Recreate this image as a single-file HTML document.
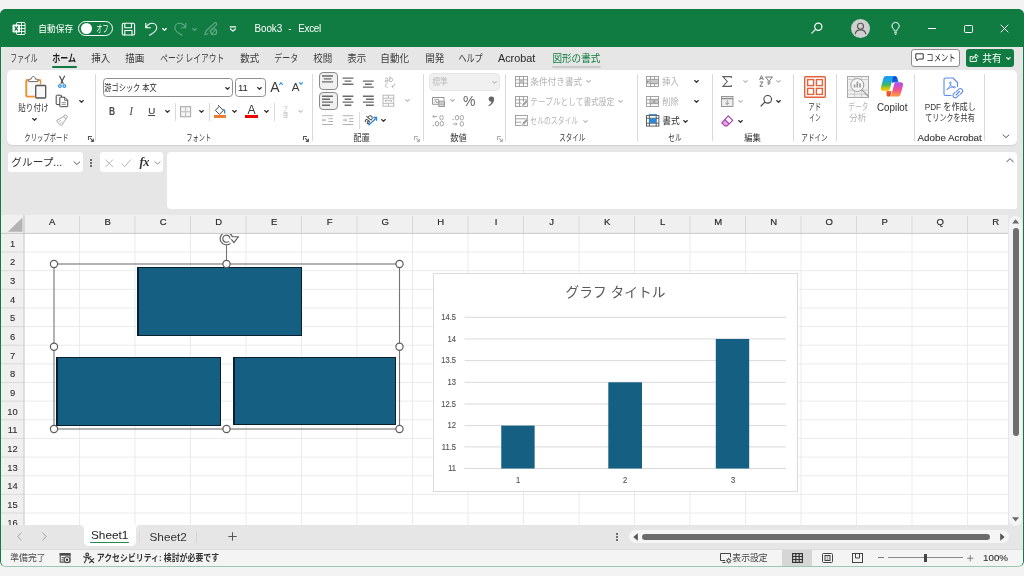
<!DOCTYPE html>
<html lang="ja">
<head>
<meta charset="utf-8">
<title>Book3 - Excel</title>
<style>
html,body{margin:0;padding:0;}
body{width:1024px;height:576px;overflow:hidden;background:#f3f3f3;font-family:"Liberation Sans",sans-serif;}
#root{position:relative;width:1024px;height:576px;overflow:hidden;background:#f3f3f3;}
#root *{box-sizing:border-box;}
#layer{position:absolute;left:0;top:0;width:1024px;height:576px;will-change:transform;}
.a{position:absolute;}
svg.j{position:absolute;overflow:visible;display:block;}
svg.j text{font-family:"Liberation Sans","Noto Sans CJK JP",sans-serif;font-size:250px;}
svg.i{position:absolute;overflow:visible;display:block;}
.t{position:absolute;white-space:nowrap;line-height:1;color:#222;}
/* window */
#win{position:absolute;left:0;top:9px;width:1024px;height:557.5px;background:#e6e6e6;border-radius:6px;border:1.1px solid #107c41;border-bottom-color:#98c8ad;}
#titlebar{position:absolute;left:0;top:9.200px;width:1024px;height:37.800px;background:#107c41;border-radius:6px 6px 0 0;}
#ribbon{position:absolute;left:7px;top:69.5px;width:1010px;height:75.5px;background:#fff;border-radius:5px;box-shadow:0 1px 1px rgba(0,0,0,.10);}
.sep{position:absolute;width:1px;background:#d6d6d6;}
.grp{position:absolute;}
/* grid */
#grid{position:absolute;left:1px;top:215px;width:1007px;height:310px;background:#fff;overflow:hidden;}
.ch{font-size:9.500px;text-align:center;color:#2a2a2a;-webkit-text-stroke:.2px #2a2a2a;}
.rh{font-size:9.400px;text-align:center;color:#2a2a2a;-webkit-text-stroke:.1px #2a2a2a;}
.yl{left:426.400px;width:30px;text-align:right;font-size:8.700px;color:#555;transform:scaleX(.87);transform-origin:100% 50%;-webkit-text-stroke:.15px #555;}
.xl{top:475.700px;width:20px;text-align:center;font-size:8.700px;color:#555;transform:scaleX(.87);-webkit-text-stroke:.15px #555;}
.shp{background:#156082;border-style:solid;border-color:#07202e;border-width:1.400px 1.100px 1.100px 2px;}
</style>
</head>
<body>
<div id="root">
<div id="win"></div>
<div id="layer">
<div id="titlebar"></div>
<!-- ===== title bar ===== -->
<svg class="i" style="left:12px;top:21px" width="14" height="15" viewBox="0 0 14 15">
 <rect x="4.5" y="1.5" width="8.500" height="12" rx="1" fill="none" stroke="#fff" stroke-width="1"/>
 <path d="M8 4.500h5M8 7.500h5M8 10.500h5M9.500 1.500v12" stroke="#fff" stroke-width="1" fill="none" opacity=".85"/>
 <rect x="0.5" y="3.5" width="7.500" height="8" rx="1" fill="#fff"/>
 <path d="M2.600 5.400l3.300 4.200M5.900 5.400l-3.300 4.200" stroke="#107c41" stroke-width="1.300" fill="none"/>
</svg>
<svg class="j" style="left:37.5px;top:24px" width="35.5" height="9.4" viewBox="0 -220 1000 250" preserveAspectRatio="none" fill="#fff"><text x="10" y="0" textLength="980" lengthAdjust="spacingAndGlyphs">自動保存</text></svg>
<div class="a" style="left:78px;top:21px;width:35.200px;height:15.400px;border:1.300px solid #fff;border-radius:8px;"></div>
<div class="a" style="left:80.600px;top:23.200px;width:11px;height:11px;border-radius:5.500px;background:#fff;"></div>
<svg class="j" style="left:96px;top:24px" width="13" height="9.4" viewBox="0 -220 430 250" preserveAspectRatio="none" fill="#fff"><text x="10" y="0" textLength="410" lengthAdjust="spacingAndGlyphs">オフ</text></svg>
<!-- save / undo / redo / pen / qat (page coords) -->
<svg class="i" style="left:0;top:0" width="1024" height="48" viewBox="0 0 1024 48" fill="none" stroke="#fff" stroke-width="1.100" stroke-linecap="round" stroke-linejoin="round">
 <rect x="122.300" y="23.300" width="12.300" height="11.700" rx="1.300"/>
 <path d="M124.800 23.500v4.200h6.700v-4.200M124.800 34.900v-4.400h7.200v4.400"/>
 <path d="M145.800 23.300v4.500h4.600"/>
 <path d="M146.100 27.500c1.500-2.800 3.900-4.200 6.200-4.200 2.700 0 4.400 2.200 4.400 4.700 0 2-1.200 3.200-2.700 4.400l-4.400 2.800"/>
 <g stroke="#63ab87">
  <path d="M185.800 23.300v4.500h-4.600"/>
  <path d="M185.500 27.500c-1.500-2.800-3.900-4.200-6.200-4.200-2.700 0-4.400 2.200-4.400 4.700 0 2 1.200 3.200 2.700 4.400l4.400 2.800"/>
  <path d="M204.800 34.700l1.200-3.700 8.300-7.800a1.400 1.400 0 0 1 2 2l-6.300 6M204.800 34.700l3.200-.9"/>
  <circle cx="213.700" cy="31.700" r="3"/><path d="M211.600 33.800l4.200-4.200"/>
 </g>
 <path d="M230.200 26.800h5.500M230.500 29l2.450 2.100L235.400 29" stroke-width="1.200"/>
</svg>
<svg class="i" style="left:161.5px;top:27.75px" width="5" height="2.83" viewBox="0 0 6 3.4" fill="none" stroke="#fff" stroke-width="1.56" stroke-linecap="round" stroke-linejoin="round"><path d="M.8.7L3 2.700 5.200.7"/></svg>
<svg class="i" style="left:191.5px;top:27.75px" width="5" height="2.83" viewBox="0 0 6 3.4" fill="none" stroke="#63ab87" stroke-width="1.44" stroke-linecap="round" stroke-linejoin="round"><path d="M.8.7L3 2.700 5.200.7"/></svg>
<div class="t" style="left:254.500px;top:24.100px;font-size:9.900px;color:#fff;transform:scaleY(1.12);letter-spacing:-.08px;">Book3</div>
<div class="t" style="left:288.300px;top:24.100px;font-size:9.900px;color:#fff;transform:scaleY(1.12);">-</div>
<div class="t" style="left:298.300px;top:24.100px;font-size:9.900px;color:#fff;transform:scaleY(1.12);letter-spacing:-.32px;">Excel</div>
<!-- right side -->
<svg class="i" style="left:810px;top:21px" width="14" height="14" viewBox="0 0 14 14" fill="none" stroke="#fff" stroke-width="1.2" stroke-linecap="round"><circle cx="8.3" cy="5.7" r="3.6"/><path d="M5.600 8.400L1.800 12.200"/></svg>
<div class="a" style="left:850.5px;top:18.5px;width:19px;height:19px;border-radius:10px;background:#d0d0d0;"></div>
<svg class="i" style="left:850.5px;top:18.5px" width="19" height="19" viewBox="0 0 19 19" fill="none" stroke="#555" stroke-width="1.1"><circle cx="9.5" cy="7.3" r="3"/><path d="M4.200 15.300c.3-3 2.400-4.400 5.300-4.400s5 1.400 5.300 4.400"/></svg>
<svg class="i" style="left:889.500px;top:21.200px" width="11.200" height="14.500" viewBox="0 0 12 16" fill="none" stroke="#fff" stroke-width="1.1" stroke-linejoin="round"><path d="M6 1.500a4 4 0 0 0-2.400 7.200c.6.500.9 1.100.9 1.800v.5h3v-.5c0-.7.300-1.300.9-1.800A4 4 0 0 0 6 1.500z"/><path d="M4.500 13h3M5 14.600h2"/></svg>
<div class="a" style="left:928px;top:28.300px;width:8.300px;height:1.100px;background:#fff;"></div>
<div class="a" style="left:964.300px;top:24.700px;width:8.300px;height:8.100px;border:1.100px solid #fff;border-radius:1.500px;"></div>
<svg class="i" style="left:1000.400px;top:24.300px" width="9" height="9" viewBox="0 0 10 10" fill="none" stroke="#fff" stroke-width="1.1"><path d="M.8.8l8.400 8.400M9.200.8L.8 9.200"/></svg>
<!-- ===== ribbon tabs ===== -->
<svg class="j" style="left:10px;top:53.2px" width="28" height="10.6" viewBox="0 -220 860 250" preserveAspectRatio="none" fill="#3c3c3c"><text x="10" y="0" textLength="840" lengthAdjust="spacingAndGlyphs">ファイル</text></svg>
<svg class="j" style="left:51.8px;top:53.2px" width="24.5" height="10.6" viewBox="0 -220 645 250" preserveAspectRatio="none" fill="#1a1a1a"><text x="10" y="0" textLength="625" lengthAdjust="spacingAndGlyphs" font-weight="bold">ホーム</text></svg>
<div class="a" style="left:51.800px;top:65.700px;width:25px;height:2px;background:#107c41;border-radius:1px;"></div>
<svg class="j" style="left:91px;top:53.2px" width="19.5" height="10.6" viewBox="0 -220 500 250" preserveAspectRatio="none" fill="#3c3c3c"><text x="6" y="0" textLength="488" lengthAdjust="spacingAndGlyphs">挿入</text></svg>
<svg class="j" style="left:124.5px;top:53.2px" width="19.5" height="10.6" viewBox="0 -220 500 250" preserveAspectRatio="none" fill="#3c3c3c"><text x="6" y="0" textLength="488" lengthAdjust="spacingAndGlyphs">描画</text></svg>
<svg class="j" style="left:160px;top:53.2px" width="64.5" height="10.6" viewBox="0 -220 1795 250" preserveAspectRatio="none" fill="#3c3c3c"><text x="10" y="0" textLength="1775" lengthAdjust="spacingAndGlyphs">ページ レイアウト</text></svg>
<svg class="j" style="left:240px;top:53.2px" width="19.5" height="10.6" viewBox="0 -220 500 250" preserveAspectRatio="none" fill="#3c3c3c"><text x="6" y="0" textLength="488" lengthAdjust="spacingAndGlyphs">数式</text></svg>
<svg class="j" style="left:274px;top:53.2px" width="24.5" height="10.6" viewBox="0 -220 645 250" preserveAspectRatio="none" fill="#3c3c3c"><text x="10" y="0" textLength="625" lengthAdjust="spacingAndGlyphs">データ</text></svg>
<svg class="j" style="left:312.5px;top:53.2px" width="19.5" height="10.6" viewBox="0 -220 500 250" preserveAspectRatio="none" fill="#3c3c3c"><text x="6" y="0" textLength="488" lengthAdjust="spacingAndGlyphs">校閲</text></svg>
<svg class="j" style="left:346.5px;top:53.2px" width="19.5" height="10.6" viewBox="0 -220 500 250" preserveAspectRatio="none" fill="#3c3c3c"><text x="6" y="0" textLength="488" lengthAdjust="spacingAndGlyphs">表示</text></svg>
<svg class="j" style="left:380px;top:53.2px" width="29.5" height="10.6" viewBox="0 -220 750 250" preserveAspectRatio="none" fill="#3c3c3c"><text x="8" y="0" textLength="734" lengthAdjust="spacingAndGlyphs">自動化</text></svg>
<svg class="j" style="left:424.5px;top:53.2px" width="19.5" height="10.6" viewBox="0 -220 500 250" preserveAspectRatio="none" fill="#3c3c3c"><text x="6" y="0" textLength="488" lengthAdjust="spacingAndGlyphs">開発</text></svg>
<svg class="j" style="left:458px;top:53.2px" width="25" height="10.6" viewBox="0 -220 645 250" preserveAspectRatio="none" fill="#3c3c3c"><text x="10" y="0" textLength="625" lengthAdjust="spacingAndGlyphs">ヘルプ</text></svg>
<div class="t" style="left:498px;top:53.400px;font-size:10.800px;color:#2e2e2e;-webkit-text-stroke:.08px #2e2e2e;">Acrobat</div>
<svg class="j" style="left:551.7px;top:53.2px" width="48.8" height="10.6" viewBox="0 -220 1215 250" preserveAspectRatio="none" fill="#107c41"><text x="10" y="0" textLength="1195" lengthAdjust="spacingAndGlyphs">図形の書式</text></svg>
<div class="a" style="left:551.500px;top:65.700px;width:49.500px;height:2px;background:#cbcbcb;border-radius:1px;"></div>
<!-- comment / share buttons -->
<div class="a" style="left:911px;top:49px;width:48.5px;height:17.5px;background:#fff;border:1px solid #8c8c8c;border-radius:3px;"></div>
<svg class="i" style="left:915px;top:53px" width="9" height="9" viewBox="0 0 9 9" fill="none" stroke="#333" stroke-width="1"><path d="M.8.8h7.400v5.200H3.600L1.900 7.900V6H.8z"/></svg>
<svg class="j" style="left:926px;top:53px" width="30" height="9.6" viewBox="0 -220 860 250" preserveAspectRatio="none" fill="#222"><text x="10" y="0" textLength="840" lengthAdjust="spacingAndGlyphs">コメント</text></svg>
<div class="a" style="left:966px;top:49px;width:48px;height:17.5px;background:#107c41;border-radius:3px;"></div>
<svg class="i" style="left:969px;top:53px" width="9.500" height="9.500" viewBox="0 0 10 10" fill="none" stroke="#fff" stroke-width="1" stroke-linejoin="round"><path d="M3.600 3.700H1.200v5.200h6.600V6.400"/><path d="M3.400 6.600c.2-2 1.500-3.400 3.700-3.500V1.200L9.400 3.500 7.100 5.800V4.200c-1.600 0-2.800.7-3.700 2.400z"/></svg>
<svg class="j" style="left:982.4px;top:53px" width="19.8" height="9.8" viewBox="0 -220 500 250" preserveAspectRatio="none" fill="#fff"><text x="6" y="0" textLength="488" lengthAdjust="spacingAndGlyphs">共有</text></svg>
<svg class="i" style="left:1005.800px;top:56.700px" width="4.800" height="3.200" viewBox="0 0 6 4" fill="none" stroke="#fff" stroke-width="1.500" stroke-linecap="round" stroke-linejoin="round"><path d="M.8.8L3 3 5.200.8"/></svg>
<!-- ===== ribbon body ===== -->
<div id="ribbon"></div>
<!-- clipboard group -->
<svg class="i" style="left:0;top:0" width="120" height="150" viewBox="0 0 120 150" fill="none">
 <path d="M29.500 79.900H27.300a1 1 0 0 0-1 1v14.600a1 1 0 0 0 1 1h7.500M37.300 79.900h2a1 1 0 0 1 1 1v3.600" stroke="#f0922e" stroke-width="2"/>
 <path d="M27.800 81v14.500h7V84.500h5V81z" fill="#fafafa"/>
 <path d="M28.700 81.600v-1.700a.7.700 0 0 1 .7-.7h1.700c.3-1.700 1.100-2.700 2.200-2.700s1.900 1 2.200 2.700h1.700a.7.700 0 0 1 .7.700v1.700z" fill="#fff" stroke="#6a6a6a" stroke-width="1"/>
 <rect x="35.700" y="85.500" width="10" height="12.500" rx=".8" fill="#f8f8f8" stroke="#555" stroke-width="1.300"/>
 <!-- scissors -->
 <path d="M59.500 75.800l3.900 8M64.700 75.800l-3.900 8" stroke="#444" stroke-width="1.100"/>
 <circle cx="59.900" cy="86" r="1.350" stroke="#3a96dd" stroke-width="1.300"/><circle cx="64.300" cy="86" r="1.350" stroke="#3a96dd" stroke-width="1.300"/>
 <!-- copy -->
 <path d="M59.800 104.600h-3a.6.600 0 0 1-.6-.6V95.800a.6.600 0 0 1 .6-.6h4.100a.6.600 0 0 1 .6.600v1.200" stroke="#444" stroke-width="1"/>
 <path d="M60.400 97.200h4.300l3 3v5.900a.6.600 0 0 1-.6.600H60.400a.6.600 0 0 1-.6-.6V97.800a.6.600 0 0 1 .6-.6z" fill="#fff" stroke="#444" stroke-width="1"/>
 <path d="M64.600 97.400v2.900h3" stroke="#444" stroke-width=".8"/><path d="M61.700 102.600h4.100M61.700 104.400h4.100" stroke="#777" stroke-width=".8"/>
 <!-- format painter (dim) -->
 <g stroke="#a2a2a2" stroke-width=".9" stroke-linejoin="round">
  <path d="M64.800 114.700l2.900 1.700-1.300 2.300-2.900-1.700z"/>
  <path d="M63.700 116.700l-7 3.600c.7 2.300 2.400 4.200 5 5.200l4.400-6.800"/>
  <path d="M58.600 121.800l2.500-1.700M60.200 123.600l2.500-1.800" stroke-width=".7"/>
 </g>
</svg>
<svg class="j" style="left:18.3px;top:102.7px" width="30.8" height="9.4" viewBox="0 -220 930 250" preserveAspectRatio="none" fill="#333"><text x="8" y="0" textLength="914" lengthAdjust="spacingAndGlyphs">貼り付け</text></svg>
<svg class="i" style="left:32.3px;top:117.55px" width="5" height="2.83" viewBox="0 0 6 3.4" fill="none" stroke="#333" stroke-width="1.5" stroke-linecap="round" stroke-linejoin="round"><path d="M.8.7L3 2.700 5.200.7"/></svg>
<svg class="i" style="left:78.5px;top:99.55px" width="5" height="2.83" viewBox="0 0 6 3.4" fill="none" stroke="#333" stroke-width="1.5" stroke-linecap="round" stroke-linejoin="round"><path d="M.8.7L3 2.700 5.200.7"/></svg>
<svg class="j" style="left:24px;top:133.1px" width="45" height="9" viewBox="0 -220 1505 250" preserveAspectRatio="none" fill="#333"><text x="10" y="0" textLength="1485" lengthAdjust="spacingAndGlyphs">クリップボード</text></svg>
<svg class="i" style="left:87.5px;top:135.6px" width="6" height="6" viewBox="0 0 6 6" fill="none" stroke="#555" stroke-width="1.1"><path d="M.5 4V.5H4"/><path d="M2.200 2.200L5.300 5.300M5.400 2.800v2.600H2.800"/></svg>
<div class="a" style="left:95px;top:74px;width:1px;height:67px;background:#d9d9d9"></div>
<!-- font group -->
<div class="a" style="left:102.500px;top:78px;width:130.500px;height:19px;border:1px solid #8f8f8f;border-radius:3.500px;background:#fff;"></div>
<svg class="j" style="left:104.3px;top:83.4px" width="53" height="9" viewBox="0 -220 1685 250" preserveAspectRatio="none" fill="#2c2c2c"><text x="8" y="0" textLength="1669" lengthAdjust="spacingAndGlyphs">游ゴシック 本文</text></svg>
<svg class="i" style="left:225px;top:86.75px" width="5" height="2.83" viewBox="0 0 6 3.4" fill="none" stroke="#333" stroke-width="1.5" stroke-linecap="round" stroke-linejoin="round"><path d="M.8.7L3 2.700 5.200.7"/></svg>
<div class="a" style="left:234.700px;top:78px;width:31px;height:19px;border:1px solid #8f8f8f;border-radius:3.500px;background:#fff;"></div>
<div class="t" style="left:238px;top:83px;font-size:9.600px;color:#222;">11</div>
<svg class="i" style="left:256.5px;top:86.75px" width="5" height="2.83" viewBox="0 0 6 3.4" fill="none" stroke="#333" stroke-width="1.5" stroke-linecap="round" stroke-linejoin="round"><path d="M.8.7L3 2.700 5.200.7"/></svg>
<div class="t" style="left:270.300px;top:79.600px;font-size:14px;color:#3a3a3a;">A</div>
<svg class="i" style="left:278.600px;top:82px" width="4" height="3" viewBox="0 0 4 3" fill="none" stroke="#2b9ae0" stroke-width="1.200" stroke-linecap="round" stroke-linejoin="round"><path d="M.6 2.500L2 .7 3.400 2.500"/></svg>
<div class="t" style="left:291.700px;top:81.900px;font-size:11.500px;color:#3a3a3a;">A</div>
<svg class="i" style="left:298.500px;top:82px" width="4" height="3" viewBox="0 0 4 3" fill="none" stroke="#2b9ae0" stroke-width="1.200" stroke-linecap="round" stroke-linejoin="round"><path d="M.6 .6L2 2.400 3.400 .6"/></svg>
<!-- row 2 -->
<div class="t" style="left:107.500px;top:105.700px;width:8px;text-align:center;font-size:10.800px;font-weight:bold;color:#4a4a4a;transform:scaleX(.78);">B</div>
<div class="t" style="left:129.300px;top:106.300px;font-size:11.600px;font-style:italic;font-family:'Liberation Serif',serif;color:#555;">I</div>
<div class="t" style="left:148.300px;top:105.500px;font-size:9.800px;color:#4a4a4a;-webkit-text-stroke:.2px #4a4a4a;">U</div>
<div class="a" style="left:148px;top:115.400px;width:7.200px;height:1.100px;background:#4a4a4a;"></div>
<svg class="i" style="left:164.5px;top:110.25px" width="5" height="2.83" viewBox="0 0 6 3.4" fill="none" stroke="#333" stroke-width="1.5" stroke-linecap="round" stroke-linejoin="round"><path d="M.8.7L3 2.700 5.200.7"/></svg>
<div class="a" style="left:175px;top:103px;width:1px;height:18px;background:#d9d9d9"></div>
<svg class="i" style="left:180px;top:105.500px" width="11.200" height="11.400" viewBox="0 0 12 12" fill="none" stroke="#a6a6a6" stroke-width="1.100"><rect x=".6" y=".6" width="10.800" height="10.800" fill="#f4f4f4"/><path d="M6 .6v10.800M.6 6h10.800" stroke="#bcbcbc"/></svg>
<svg class="i" style="left:198.5px;top:110.25px" width="5" height="2.83" viewBox="0 0 6 3.4" fill="none" stroke="#333" stroke-width="1.5" stroke-linecap="round" stroke-linejoin="round"><path d="M.8.7L3 2.700 5.200.7"/></svg>
<div class="a" style="left:208.8px;top:103px;width:1px;height:18px;background:#d9d9d9"></div>
<!-- fill colour -->
<svg class="i" style="left:214px;top:104.500px" width="12" height="11" viewBox="0 0 12 11" fill="none" stroke="#444" stroke-width="1" stroke-linejoin="round"><path d="M5.300 1.300l4 4.200-3.900 3.900L1.400 5.300z"/><path d="M5.300 1.300L4 .3"/><path d="M9.300 4.200c1.300.8 1.700 2.600 1.300 4.300" stroke="#2b88d8" stroke-width="1.300"/></svg>
<div class="a" style="left:213.500px;top:115px;width:12.500px;height:2.800px;background:#ed7d31;"></div>
<svg class="i" style="left:232px;top:110.35px" width="5" height="2.83" viewBox="0 0 6 3.4" fill="none" stroke="#333" stroke-width="1.5" stroke-linecap="round" stroke-linejoin="round"><path d="M.8.7L3 2.700 5.200.7"/></svg>
<!-- font colour -->
<div class="t" style="left:247.400px;top:104.100px;font-size:12.200px;color:#3a3a3a;">A</div>
<div class="a" style="left:245px;top:114.800px;width:12.800px;height:3px;background:#f00000;"></div>
<svg class="i" style="left:264px;top:110.35px" width="5" height="2.83" viewBox="0 0 6 3.4" fill="none" stroke="#333" stroke-width="1.5" stroke-linecap="round" stroke-linejoin="round"><path d="M.8.7L3 2.700 5.200.7"/></svg>
<div class="a" style="left:274.2px;top:103px;width:1px;height:18px;background:#d9d9d9"></div>
<svg class="j" style="left:282.6px;top:105.700px" width="5.2" height="6.2" viewBox="0 -220 215 250" preserveAspectRatio="none" fill="#bdbdbd"><text x="5" y="0" textLength="205" lengthAdjust="spacingAndGlyphs">ア</text></svg>
<svg class="j" style="left:282.6px;top:112.2px" width="5.4" height="6.2" viewBox="0 -220 250 250" preserveAspectRatio="none" fill="#bdbdbd"><text x="3" y="0" textLength="244" lengthAdjust="spacingAndGlyphs">亜</text></svg>
<svg class="i" style="left:297.7px;top:110.35px" width="5" height="2.83" viewBox="0 0 6 3.4" fill="none" stroke="#c2c2c2" stroke-width="1.32" stroke-linecap="round" stroke-linejoin="round"><path d="M.8.7L3 2.700 5.200.7"/></svg>
<svg class="j" style="left:185.5px;top:133.1px" width="25.5" height="9" viewBox="0 -220 860 250" preserveAspectRatio="none" fill="#333"><text x="10" y="0" textLength="840" lengthAdjust="spacingAndGlyphs">フォント</text></svg>
<svg class="i" style="left:303px;top:135.6px" width="6" height="6" viewBox="0 0 6 6" fill="none" stroke="#555" stroke-width="1.1"><path d="M.5 4V.5H4"/><path d="M2.200 2.200L5.300 5.300M5.400 2.800v2.600H2.800"/></svg>
<div class="a" style="left:311.5px;top:74px;width:1px;height:67px;background:#d9d9d9"></div>
<!-- alignment group -->
<div class="a" style="left:318.600px;top:72.400px;width:19.200px;height:18px;border:1.200px solid #8a8a8a;border-radius:4px;background:#f0f0f0;"></div>
<div class="a" style="left:318.600px;top:92.200px;width:19.200px;height:17.800px;border:1.200px solid #8a8a8a;border-radius:4px;background:#f0f0f0;"></div>
<svg class="i" style="left:0;top:0" width="1024" height="150" viewBox="0 0 1024 150" fill="none" stroke="#6a6a6a" stroke-width="1.400">
 <!-- top / middle / bottom -->
 <path d="M322 76h11M323.800 78.900h7.700M322 81.900h11"/>
 <path d="M342.600 78.100h10.800M344.600 81.100h6.800M342.600 84.200h10.800"/>
 <path d="M362.900 81.100h10.900M364.900 84.200h6.900M362.900 87.100h10.900"/>
 <!-- left / center / right -->
 <path d="M322 96.200h11M322 99.200h8M322 102.100h11M322 105.200h8"/>
 <path d="M342.600 96.200h10.800M344.600 99.200h6.800M342.600 102.100h10.800M344.600 105.200h6.800"/>
 <path d="M362.900 96.200h10.900M365.900 99.200h7.900M362.900 102.100h10.900M365.900 105.200h7.900"/>
 <!-- wrap text (dim) -->
 <g stroke="#b2b2b2" stroke-width=".9">
  <path d="M385.300 79.200c0-1.700 2.600-1.700 2.600 0v2.300M387.900 80.200c-1.200 0-2.800.1-2.800 1.100 0 1.200 2.800 1 2.800-.8M389.800 76.500v5.200c1.700.3 3-.5 3-1.900s-1.300-2.100-3-1.700"/>
  <path d="M387.600 83.800c-1.600 0-2.300.8-2.300 1.800s.7 1.800 2.300 1.800M394.500 83.600c.4 1.600-.4 3-2.600 3M393.300 85.400l-1.500 1.200 1.500 1.300"/>
 </g>
 <!-- merge (dim) -->
 <g stroke="#b2b2b2" stroke-width=".9">
  <rect x="383" y="95.200" width="10.800" height="11"/><path d="M383 98.200h10.800M383 103.300h10.800M388.400 95.200v3M388.400 103.300v2.900M385 100.700h6.800M386.300 99.500l-1.300 1.200 1.300 1.300M390.500 99.500l1.300 1.200-1.300 1.300"/>
 </g>
 <!-- indents (dim) -->
 <g stroke="#b2b2b2" stroke-width="1">
  <path d="M322 115.700h11M328.400 118.700h4.600M328.400 121.500h4.600M322 124.500h11M326.200 120.100h-3.800M323.900 118.600l-1.500 1.500 1.500 1.500" />
  <path d="M342.600 115.700h10.800M349 118.700h4.400M349 121.500h4.400M342.600 124.500h10.800M342.800 120.100h3.800M345.100 118.600l1.500 1.500-1.500 1.500"/>
 </g>
 <path d="M359.600 112v17.300" stroke="#d9d9d9" stroke-width="1"/>
 <!-- orientation -->
 <g transform="rotate(-52 369 119)" stroke="#444" stroke-width=".95">
  <path d="M364.600 118.300c0-1.800 2.800-1.800 2.800 0v3M367.400 119.500c-1.300 0-3 .1-3 1.200 0 1.300 3 1.100 3-.9M369.500 115.300v6c1.800.3 3.200-.6 3.200-2.100s-1.400-2.300-3.200-1.900"/>
 </g>
 <path d="M368.500 125.300l7.600-7.100" stroke="#2b88d8" stroke-width="1.300"/><path d="M373.300 117.500h3.300v3.300" stroke="#2b88d8" stroke-width="1.300"/>
</svg>
<svg class="i" style="left:404.8px;top:99.35px" width="5" height="2.83" viewBox="0 0 6 3.4" fill="none" stroke="#bcbcbc" stroke-width="1.44" stroke-linecap="round" stroke-linejoin="round"><path d="M.8.7L3 2.700 5.200.7"/></svg>
<svg class="i" style="left:381.2px;top:119.45px" width="5" height="2.83" viewBox="0 0 6 3.4" fill="none" stroke="#333" stroke-width="1.5" stroke-linecap="round" stroke-linejoin="round"><path d="M.8.7L3 2.700 5.200.7"/></svg>
<svg class="j" style="left:353px;top:133.1px" width="17" height="9" viewBox="0 -220 500 250" preserveAspectRatio="none" fill="#333"><text x="6" y="0" textLength="488" lengthAdjust="spacingAndGlyphs">配置</text></svg>
<svg class="i" style="left:414px;top:135.6px" width="6" height="6" viewBox="0 0 6 6" fill="none" stroke="#b0b0b0" stroke-width="1.1"><path d="M.5 4V.5H4"/><path d="M2.200 2.200L5.300 5.300M5.400 2.800v2.600H2.800"/></svg>
<div class="a" style="left:422.5px;top:74px;width:1px;height:67px;background:#d9d9d9"></div>
<!-- number group -->
<div class="a" style="left:429px;top:72.500px;width:71px;height:18px;border:1px solid #e6e6e6;border-radius:4px;background:#f0f0f0;"></div>
<svg class="j" style="left:432px;top:77.1px" width="16" height="9.2" viewBox="0 -220 500 250" preserveAspectRatio="none" fill="#bdbdbd"><text x="6" y="0" textLength="488" lengthAdjust="spacingAndGlyphs">標準</text></svg>
<svg class="i" style="left:492.3px;top:80.75px" width="5" height="2.83" viewBox="0 0 6 3.4" fill="none" stroke="#bbbbbb" stroke-width="1.32" stroke-linecap="round" stroke-linejoin="round"><path d="M.8.7L3 2.700 5.200.7"/></svg>
<svg class="i" style="left:432px;top:97px" width="13" height="10" viewBox="0 0 13 10" fill="none" stroke="#8a8a8a" stroke-width=".9"><path d="M6 7.300H.5V.5h11.500v3"/><circle cx="5.200" cy="3.800" r="1.700"/><path d="M2 2.200l1 1M2 5.600l1-1"/><rect x="6.800" y="4.200" width="5.600" height="5.300" fill="#fff"/><path d="M6.800 6h5.600M6.800 7.800h5.600"/></svg>
<svg class="i" style="left:450px;top:99.35px" width="5" height="2.83" viewBox="0 0 6 3.4" fill="none" stroke="#b0b0b0" stroke-width="1.44" stroke-linecap="round" stroke-linejoin="round"><path d="M.8.7L3 2.700 5.200.7"/></svg>
<div class="t" style="left:463px;top:93.500px;font-size:14px;color:#666;">%</div>
<svg class="i" style="left:486.500px;top:95.500px" width="8" height="11" viewBox="0 0 8 11"><path d="M4.300 .4a2.700 2.700 0 0 1 2.800 2.900c0 3-2 5.600-5.200 6.900l-.5-.9c1.900-1 3-2.300 3.200-3.700a2.600 2.600 0 0 1-3-2.600A2.600 2.600 0 0 1 4.300 .4z" fill="#666"/></svg>
<svg class="i" style="left:431.500px;top:114.500px" width="13" height="12" viewBox="0 0 13 12" fill="none" stroke="#a4a4a4" stroke-width="1"><path d="M5 1.500H.8M2.200 .2L.8 1.500l1.400 1.300"/><ellipse cx="9.500" cy="2.700" rx="1.700" ry="2.300"/><circle cx="1.200" cy="10.500" r=".4"/><ellipse cx="5" cy="8.700" rx="1.700" ry="2.300"/><ellipse cx="9.800" cy="8.700" rx="1.700" ry="2.300"/></svg>
<svg class="i" style="left:452px;top:114.500px" width="13" height="12" viewBox="0 0 13 12" fill="none" stroke="#a4a4a4" stroke-width="1"><circle cx="1.200" cy="4.500" r=".4"/><ellipse cx="5" cy="2.700" rx="1.700" ry="2.300"/><ellipse cx="9.800" cy="2.700" rx="1.700" ry="2.300"/><path d="M.8 9h4.200M3.600 7.700L5 9 3.600 10.300"/><ellipse cx="9.800" cy="8.900" rx="1.700" ry="2.300"/></svg>
<svg class="j" style="left:450px;top:133.1px" width="17" height="9" viewBox="0 -220 500 250" preserveAspectRatio="none" fill="#333"><text x="6" y="0" textLength="488" lengthAdjust="spacingAndGlyphs">数値</text></svg>
<svg class="i" style="left:497px;top:135.6px" width="6" height="6" viewBox="0 0 6 6" fill="none" stroke="#b0b0b0" stroke-width="1.1"><path d="M.5 4V.5H4"/><path d="M2.200 2.200L5.300 5.300M5.400 2.800v2.600H2.800"/></svg>
<div class="a" style="left:505.2px;top:74px;width:1px;height:67px;background:#d9d9d9"></div>
<!-- styles group -->
<svg class="i" style="left:515px;top:75.500px" width="13" height="11" viewBox="0 0 13 11" fill="none" stroke="#9a9a9a" stroke-width=".9"><rect x=".5" y=".5" width="12" height="10"/><path d="M.5 3.800h12M.5 7.200h12M4.500 .5v10M8.500 .5v10"/><rect x="4.500" y="3.800" width="4" height="3.400" fill="#bdbdbd" stroke="none"/></svg>
<svg class="j" style="left:529.8px;top:76.7px" width="52.5" height="9" viewBox="0 -220 1465 250" preserveAspectRatio="none" fill="#b2b2b2"><text x="8" y="0" textLength="1449" lengthAdjust="spacingAndGlyphs">条件付き書式</text></svg>
<svg class="i" style="left:585.9px;top:80.35px" width="5" height="2.83" viewBox="0 0 6 3.4" fill="none" stroke="#bcbcbc" stroke-width="1.44" stroke-linecap="round" stroke-linejoin="round"><path d="M.8.7L3 2.700 5.200.7"/></svg>
<svg class="i" style="left:515px;top:95.500px" width="13" height="11" viewBox="0 0 13 11" fill="none" stroke="#9a9a9a" stroke-width=".9"><rect x=".5" y=".5" width="12" height="10"/><path d="M.5 3.800h12M.5 7.200h6M4.500 .5v10M8.500 .5v5"/><path d="M6.500 10.500l1-2.800L11.800 3.400l1.700 1.700L9.200 9.500z" fill="#9a9a9a" stroke="#fff" stroke-width=".5"/></svg>
<svg class="j" style="left:529.8px;top:96.7px" width="84.5" height="9" viewBox="0 -220 2505 250" preserveAspectRatio="none" fill="#b2b2b2"><text x="10" y="0" textLength="2485" lengthAdjust="spacingAndGlyphs">テーブルとして書式設定</text></svg>
<svg class="i" style="left:617.5px;top:100.35px" width="5" height="2.83" viewBox="0 0 6 3.4" fill="none" stroke="#bcbcbc" stroke-width="1.44" stroke-linecap="round" stroke-linejoin="round"><path d="M.8.7L3 2.700 5.200.7"/></svg>
<svg class="i" style="left:515px;top:115px" width="13" height="11" viewBox="0 0 13 11" fill="none" stroke="#9a9a9a" stroke-width=".9"><rect x=".5" y=".5" width="12" height="10"/><path d="M.5 3.800h12M.5 7.200h6"/><path d="M6.500 10.500l1-2.800L11.800 3.400l1.700 1.700L9.200 9.500z" fill="#9a9a9a" stroke="#fff" stroke-width=".5"/></svg>
<svg class="j" style="left:529.8px;top:116.1px" width="48.5" height="9" viewBox="0 -220 1505 250" preserveAspectRatio="none" fill="#b2b2b2"><text x="10" y="0" textLength="1485" lengthAdjust="spacingAndGlyphs">セルのスタイル</text></svg>
<svg class="i" style="left:582.5px;top:119.75px" width="5" height="2.83" viewBox="0 0 6 3.4" fill="none" stroke="#bcbcbc" stroke-width="1.44" stroke-linecap="round" stroke-linejoin="round"><path d="M.8.7L3 2.700 5.200.7"/></svg>
<svg class="j" style="left:558.5px;top:133.1px" width="26.5" height="9" viewBox="0 -220 860 250" preserveAspectRatio="none" fill="#333"><text x="10" y="0" textLength="840" lengthAdjust="spacingAndGlyphs">スタイル</text></svg>
<div class="a" style="left:637px;top:74px;width:1px;height:67px;background:#d9d9d9"></div>
<!-- cells group -->
<svg class="i" style="left:646px;top:75.500px" width="13" height="11" viewBox="0 0 13 11" fill="none" stroke="#9a9a9a" stroke-width=".9"><rect x=".5" y=".5" width="12" height="10"/><path d="M.5 3.800h12M.5 7.200h12M4.500 .5v10M8.500 .5v10"/><rect x="4" y="3.300" width="8.500" height="4.400" fill="#c8c8c8" stroke="#9a9a9a"/><path d="M3.300 5.500H.8M2 4.300L.8 5.500 2 6.700" stroke="#8a8a8a"/></svg>
<svg class="j" style="left:661.6px;top:76.7px" width="17" height="9" viewBox="0 -220 500 250" preserveAspectRatio="none" fill="#b2b2b2"><text x="6" y="0" textLength="488" lengthAdjust="spacingAndGlyphs">挿入</text></svg>
<svg class="i" style="left:694px;top:80.35px" width="5" height="2.83" viewBox="0 0 6 3.4" fill="none" stroke="#333" stroke-width="1.5" stroke-linecap="round" stroke-linejoin="round"><path d="M.8.7L3 2.700 5.200.7"/></svg>
<svg class="i" style="left:646px;top:95.500px" width="13" height="11" viewBox="0 0 13 11" fill="none" stroke="#9a9a9a" stroke-width=".9"><rect x=".5" y=".5" width="12" height="10"/><path d="M.5 3.800h12M.5 7.200h12M4.500 .5v10"/><rect x="4" y="3.300" width="8.500" height="4.400" fill="#c8c8c8" stroke="#9a9a9a"/><path d="M6.800 4.300l2.400 2.400M9.200 4.300L6.800 6.700" stroke="#8a8a8a"/></svg>
<svg class="j" style="left:661.6px;top:96.7px" width="17" height="9" viewBox="0 -220 500 250" preserveAspectRatio="none" fill="#b2b2b2"><text x="6" y="0" textLength="488" lengthAdjust="spacingAndGlyphs">削除</text></svg>
<svg class="i" style="left:694px;top:100.35px" width="5" height="2.83" viewBox="0 0 6 3.4" fill="none" stroke="#333" stroke-width="1.5" stroke-linecap="round" stroke-linejoin="round"><path d="M.8.7L3 2.700 5.200.7"/></svg>
<svg class="i" style="left:646px;top:114.300px" width="13.400" height="12.600" viewBox="0 0 13.400 12.600" fill="none" stroke="#505050" stroke-width=".9"><rect x=".5" y="1.600" width="12.400" height="10.500"/><path d="M.5 4.300h12.400M.5 9.200h12.400M3.400 1.600v10.500M10.200 1.600v10.500"/><rect x="3.400" y="4.300" width="6.800" height="4.900" fill="#2b88d8" stroke="none"/><path d="M3.200 .6h7.200M3.300 0v1.400M10.300 0v1.400" stroke="#2b88d8" stroke-width="1"/></svg>
<svg class="j" style="left:661.8px;top:116px" width="18" height="9.2" viewBox="0 -220 500 250" preserveAspectRatio="none" fill="#2e2e2e"><text x="6" y="0" textLength="488" lengthAdjust="spacingAndGlyphs">書式</text></svg>
<svg class="i" style="left:682.5px;top:119.75px" width="5" height="2.83" viewBox="0 0 6 3.4" fill="none" stroke="#333" stroke-width="1.5" stroke-linecap="round" stroke-linejoin="round"><path d="M.8.7L3 2.700 5.200.7"/></svg>
<svg class="j" style="left:668px;top:133.1px" width="14" height="9" viewBox="0 -220 430 250" preserveAspectRatio="none" fill="#333"><text x="10" y="0" textLength="410" lengthAdjust="spacingAndGlyphs">セル</text></svg>
<div class="a" style="left:711.5px;top:74px;width:1px;height:67px;background:#d9d9d9"></div>
<!-- editing group -->
<svg class="i" style="left:721.500px;top:75.500px" width="10" height="11" viewBox="0 0 10 11" fill="none" stroke="#5e5e5e" stroke-width="1.100"><path d="M9.300 2V.6H.9l4.400 4.900L.9 10.400h8.400V9"/></svg>
<svg class="i" style="left:743.2px;top:80.35px" width="5" height="2.83" viewBox="0 0 6 3.4" fill="none" stroke="#bcbcbc" stroke-width="1.44" stroke-linecap="round" stroke-linejoin="round"><path d="M.8.7L3 2.700 5.200.7"/></svg>
<svg class="i" style="left:758.500px;top:75px" width="14" height="12" viewBox="0 0 14 12" fill="none" stroke="#777" stroke-width="1"><path d="M.6 5L2.500 .7 4.400 5M1.200 3.600h2.600M.8 7h3.200L.8 11.300h3.400"/><path d="M6.500 2h7L10.800 5.200v3.300L9.200 9.500V5.200z"/></svg>
<svg class="i" style="left:776.1px;top:80.35px" width="5" height="2.83" viewBox="0 0 6 3.4" fill="none" stroke="#bcbcbc" stroke-width="1.44" stroke-linecap="round" stroke-linejoin="round"><path d="M.8.7L3 2.700 5.200.7"/></svg>
<svg class="i" style="left:721px;top:95.500px" width="12.500" height="11" viewBox="0 0 12.500 11" fill="none" stroke="#8e8e8e" stroke-width=".9"><rect x=".5" y=".5" width="11.500" height="10" fill="#ededed"/><path d="M.5 2.600h11.500" stroke-width="1.300"/><path d="M6.250 4.300v4.200M4.500 6.900l1.750 1.700L8 6.900"/></svg>
<svg class="i" style="left:737.9px;top:100.35px" width="5" height="2.83" viewBox="0 0 6 3.4" fill="none" stroke="#bcbcbc" stroke-width="1.44" stroke-linecap="round" stroke-linejoin="round"><path d="M.8.7L3 2.700 5.200.7"/></svg>
<svg class="i" style="left:760px;top:94px" width="13" height="13" viewBox="0 0 13 13" fill="none" stroke="#444" stroke-width="1.100" stroke-linecap="round"><circle cx="7.700" cy="5.300" r="3.800"/><path d="M4.900 8.100L1 12"/></svg>
<svg class="i" style="left:776.1px;top:100.35px" width="5" height="2.83" viewBox="0 0 6 3.4" fill="none" stroke="#333" stroke-width="1.5" stroke-linecap="round" stroke-linejoin="round"><path d="M.8.7L3 2.700 5.200.7"/></svg>
<svg class="i" style="left:721px;top:114.500px" width="12.500" height="12" viewBox="0 0 12.500 12" fill="none" stroke="#ad3fb4" stroke-width="1.200" stroke-linejoin="round"><path d="M.8 7.200L3.900 4.100l4.300 4.300-2.500 2.500H3.800z" fill="#dba8df" stroke="none"/><path d="M7.200 .8l4.500 4.500-5.600 5.600H3.800L.8 7.800z"/><path d="M3.700 4.300l4.500 4.500"/></svg>
<svg class="i" style="left:737.9px;top:119.75px" width="5" height="2.83" viewBox="0 0 6 3.4" fill="none" stroke="#333" stroke-width="1.5" stroke-linecap="round" stroke-linejoin="round"><path d="M.8.7L3 2.700 5.200.7"/></svg>
<svg class="j" style="left:743.5px;top:133.1px" width="17" height="9" viewBox="0 -220 500 250" preserveAspectRatio="none" fill="#333"><text x="6" y="0" textLength="488" lengthAdjust="spacingAndGlyphs">編集</text></svg>
<div class="a" style="left:792.5px;top:74px;width:1px;height:67px;background:#d9d9d9"></div>
<!-- add-ins -->
<svg class="i" style="left:804px;top:76px" width="22" height="22" viewBox="0 0 22 22" fill="none" stroke="#e2623c" stroke-width="1.400"><rect x=".7" y=".7" width="20.600" height="20.600" rx="1"/><rect x="3.600" y="3.600" width="6" height="6"/><rect x="12.400" y="3.600" width="6" height="6"/><rect x="3.600" y="12.400" width="6" height="6"/><rect x="12.400" y="12.400" width="6" height="6"/></svg>
<svg class="j" style="left:808px;top:101.8px" width="13.5" height="9.4" viewBox="0 -220 430 250" preserveAspectRatio="none" fill="#363636"><text x="10" y="0" textLength="410" lengthAdjust="spacingAndGlyphs">アド</text></svg>
<svg class="j" style="left:808.6px;top:113.3px" width="12" height="9.4" viewBox="0 -220 430 250" preserveAspectRatio="none" fill="#363636"><text x="10" y="0" textLength="410" lengthAdjust="spacingAndGlyphs">イン</text></svg>
<svg class="j" style="left:801px;top:133.1px" width="27" height="9" viewBox="0 -220 860 250" preserveAspectRatio="none" fill="#333"><text x="10" y="0" textLength="840" lengthAdjust="spacingAndGlyphs">アドイン</text></svg>
<div class="a" style="left:835.5px;top:74px;width:1px;height:67px;background:#d9d9d9"></div>
<!-- data analysis (dim) -->
<svg class="i" style="left:847px;top:76px" width="22" height="22" viewBox="0 0 22 22" fill="none" stroke="#a8a8a8" stroke-width="1"><rect x=".5" y=".5" width="21" height="21" fill="#f0f0f0"/><path d="M.5 3.500h21M.5 14.200h21M.5 18.200h21M7.500 .5v21M14.500 .5v21" stroke="#c4c4c4" stroke-width=".8"/><circle cx="10.300" cy="9" r="6.500" fill="#f7f7f7" stroke="#9c9c9c"/><path d="M15 13.800l6.500 6.700" stroke="#9c9c9c" stroke-width="1.200"/><path d="M7.600 11.500V8.500M10.300 11.500V5.700M13 11.500V7.200" stroke="#9a9a9a" stroke-width="1.600"/></svg>
<svg class="j" style="left:847.5px;top:101.8px" width="20.8" height="9.4" viewBox="0 -220 645 250" preserveAspectRatio="none" fill="#b4b4b4"><text x="10" y="0" textLength="625" lengthAdjust="spacingAndGlyphs">データ</text></svg>
<svg class="j" style="left:849px;top:113.3px" width="17.6" height="9.4" viewBox="0 -220 500 250" preserveAspectRatio="none" fill="#b4b4b4"><text x="6" y="0" textLength="488" lengthAdjust="spacingAndGlyphs">分析</text></svg>
<!-- copilot -->
<svg class="i" style="left:874px;top:72px" width="36" height="30" viewBox="0 0 691 576">
 <defs>
  <linearGradient id="cpa" x1="0" y1="80" x2="0" y2="362" gradientUnits="userSpaceOnUse"><stop offset="0" stop-color="#1a9cf2"/><stop offset=".3" stop-color="#1ea7dc"/><stop offset=".58" stop-color="#3cb765"/><stop offset=".85" stop-color="#d8c80c"/><stop offset="1" stop-color="#f0c400"/></linearGradient>
  <linearGradient id="cpc" x1="0" y1="195" x2="0" y2="472" gradientUnits="userSpaceOnUse"><stop offset="0" stop-color="#a452f5"/><stop offset=".3" stop-color="#d251c0"/><stop offset=".55" stop-color="#f2528a"/><stop offset=".85" stop-color="#fb8a52"/><stop offset="1" stop-color="#ff9c3c"/></linearGradient>
  <linearGradient id="cpd" x1="0" y1="365" x2="0" y2="472" gradientUnits="userSpaceOnUse"><stop offset="0" stop-color="#f4642c"/><stop offset="1" stop-color="#e8402a"/></linearGradient>
  <linearGradient id="cpb" x1="350" y1="90" x2="460" y2="190" gradientUnits="userSpaceOnUse"><stop offset="0" stop-color="#0a3bd0"/><stop offset="1" stop-color="#1a72e8"/></linearGradient>
 </defs>
 <path d="M345 95C355 82 370 78 395 78c35 0 50 18 58 50l18 67H400c-25 0-38 5-50 22z" fill="url(#cpb)"/>
 <path d="M240 365h95l-8 60c-6 30-20 47-52 47-22 0-32-14-35-36z" fill="url(#cpd)"/>
 <path d="M232 78h168c-24 6-38 28-46 60l-46 178c-8 30-24 46-52 46h-76c-40 0-58-26-48-66l44-160c10-38 26-58 56-58z" fill="url(#cpa)"/>
 <path d="M400 195h108c42 0 58 28 48 66l-44 160c-10 36-28 51-60 51H290c26-6 42-28 50-60l42-160c6-24 12-42 18-57z" fill="url(#cpc)"/>
</svg>
<div class="t" style="left:877.300px;top:101.700px;font-size:10.600px;color:#2e2e2e;transform:scaleX(.925);transform-origin:0 50%;">Copilot</div>
<div class="a" style="left:914px;top:74px;width:1px;height:67px;background:#d9d9d9"></div>
<!-- adobe -->
<svg class="i" style="left:942px;top:77px" width="22" height="22" viewBox="0 0 22 22" fill="none" stroke="#5a8bee" stroke-width="1.100" stroke-linejoin="round" stroke-linecap="round"><path d="M9 18.500H3.500a1.500 1.500 0 0 1-1.500-1.500V2.500A1.500 1.500 0 0 1 3.500 1h7.500l4.500 4.500v4"/><path d="M5 12.500c2.500-1.500 4-5 4-7 0-1-1.300-1-1.300 0 0 2.500 2.800 5.300 5 5.300 1 0 1-1.200 0-1.200-2 0-5.700 1.400-7.700 2.900z" stroke-width=".9"/><path d="M14.300 14.600l2.300-2.300a2.300 2.300 0 0 1 3.300 3.300l-1.400 1.400M17.200 17.800l-2.300 2.300a2.300 2.300 0 0 1-3.300-3.300l1.400-1.400M14 18l3.500-3.500"/></svg>
<svg class="j" style="left:924px;top:101.800px" width="52.5" height="9.4" viewBox="0 -220 1483.2 250" preserveAspectRatio="none" fill="#363636"><text x="20" y="0" textLength="1445" lengthAdjust="spacingAndGlyphs">PDF を作成し</text></svg>
<svg class="j" style="left:925px;top:113.3px" width="50" height="9.4" viewBox="0 -220 1575 250" preserveAspectRatio="none" fill="#363636"><text x="10" y="0" textLength="1555" lengthAdjust="spacingAndGlyphs">てリンクを共有</text></svg>
<div class="t" style="left:917.500px;top:133px;font-size:9.800px;color:#333;-webkit-text-stroke:.12px #333;">Adobe Acrobat</div>
<div class="a" style="left:984.2px;top:74px;width:1px;height:67px;background:#d9d9d9"></div>
<svg class="i" style="left:1002px;top:133.9px" width="8" height="4.53" viewBox="0 0 6 3.4" fill="none" stroke="#444" stroke-width="0.675" stroke-linecap="round" stroke-linejoin="round"><path d="M.8.7L3 2.700 5.200.7"/></svg>
<!-- ===== formula bar ===== -->
<div class="a" style="left:7.500px;top:151.500px;width:75.500px;height:20.500px;background:#fff;border-radius:3px;"></div>
<svg class="j" style="left:10.8px;top:157.4px" width="52" height="10.200" viewBox="0 -220 1068.5 250" preserveAspectRatio="none" fill="#303030"><text x="8" y="0" textLength="1045" lengthAdjust="spacingAndGlyphs">グループ...</text></svg>
<svg class="i" style="left:72.8px;top:160.85px" width="7.8" height="4.42" viewBox="0 0 6 3.4" fill="none" stroke="#3a3a3a" stroke-width="0.654" stroke-linecap="round" stroke-linejoin="round"><path d="M.8.7L3 2.700 5.200.7"/></svg>
<div class="a" style="left:90px;top:158.500px;width:2px;height:2px;background:#444;border-radius:1px;box-shadow:0 3px 0 #444,0 6px 0 #444;"></div>
<div class="a" style="left:99.500px;top:151.500px;width:63.500px;height:20.500px;background:#fff;border-radius:3px;"></div>
<svg class="i" style="left:104.500px;top:158.500px" width="8.500" height="8.500" viewBox="0 0 9 9" fill="none" stroke="#b0b0b0" stroke-width="1"><path d="M.6.6l7.800 7.800M8.400.6L.6 8.400"/></svg>
<svg class="i" style="left:120.500px;top:158.500px" width="10.500" height="8.500" viewBox="0 0 11 9" fill="none" stroke="#b0b0b0" stroke-width="1"><path d="M.6 4.800l3.200 3.400L10.400.6"/></svg>
<div class="t" style="left:139.500px;top:156px;font-size:12.500px;font-style:italic;font-weight:bold;font-family:'Liberation Serif',serif;color:#333;letter-spacing:-.5px;">fx</div>
<svg class="i" style="left:154.3px;top:161.05px" width="7" height="3.97" viewBox="0 0 6 3.4" fill="none" stroke="#7a7a7a" stroke-width="0.729" stroke-linecap="round" stroke-linejoin="round"><path d="M.8.7L3 2.700 5.200.7"/></svg>
<div class="a" style="left:167px;top:151.500px;width:850px;height:57.500px;background:#fff;border-radius:4px 4px 2px 4px;"></div>
<svg class="i" style="left:1006px;top:158.400px" width="8" height="4.500" viewBox="0 0 8 4.500" fill="none" stroke="#8c8c8c" stroke-width="1.100"><path d="M.6 4L4 .7 7.400 4"/></svg>
<!-- ===== sheet grid ===== -->
<svg class="i" style="left:1px;top:215px" width="1007" height="310.5" viewBox="0 0 1007 310.5"><rect width="1007" height="310.5" fill="#fff"/><rect width="1007" height="18.4" fill="#f0f0f0"/><rect width="23" height="310.5" fill="#f0f0f0"/><path d="M23 18.400V310.500M78.500 18.400V310.500M134 18.400V310.500M189.500 18.400V310.500M245 18.400V310.500M300.500 18.400V310.500M356 18.400V310.500M411.500 18.400V310.500M467 18.400V310.500M522.500 18.400V310.500M578 18.400V310.500M633.500 18.400V310.500M689 18.400V310.500M744.500 18.400V310.500M800 18.400V310.500M855.500 18.400V310.500M911 18.400V310.500M966.500 18.400V310.500M23 18.400H1007M23 37.040H1007M23 55.680H1007M23 74.320H1007M23 92.960H1007M23 111.600H1007M23 130.240H1007M23 148.880H1007M23 167.520H1007M23 186.160H1007M23 204.800H1007M23 223.440H1007M23 242.080H1007M23 260.720H1007M23 279.360H1007M23 298H1007" stroke="#ebebeb" stroke-width="1" fill="none"/><path d="M23 1V18.400M78.500 1V18.400M134 1V18.400M189.500 1V18.400M245 1V18.400M300.500 1V18.400M356 1V18.400M411.500 1V18.400M467 1V18.400M522.500 1V18.400M578 1V18.400M633.500 1V18.400M689 1V18.400M744.500 1V18.400M800 1V18.400M855.500 1V18.400M911 1V18.400M966.500 1V18.400M0 18.400H23M0 37.040H23M0 55.680H23M0 74.320H23M0 92.960H23M0 111.600H23M0 130.240H23M0 148.880H23M0 167.520H23M0 186.160H23M0 204.800H23M0 223.440H23M0 242.080H23M0 260.720H23M0 279.360H23M0 298H23" stroke="#d9d9d9" stroke-width="1" fill="none"/><path d="M0 18.400H1007M23 0V310.500" stroke="#cbcbcb" stroke-width="1" fill="none"/><path d="M21.500 2.600V16.750H6.900z" fill="#b4b4b4"/></svg><div class="t ch" style="left:42.15px;top:216.6px;width:20px;">A</div><div class="t ch" style="left:97.65px;top:216.6px;width:20px;">B</div><div class="t ch" style="left:153.15px;top:216.6px;width:20px;">C</div><div class="t ch" style="left:208.65px;top:216.6px;width:20px;">D</div><div class="t ch" style="left:264.15px;top:216.6px;width:20px;">E</div><div class="t ch" style="left:319.65px;top:216.6px;width:20px;">F</div><div class="t ch" style="left:375.15px;top:216.6px;width:20px;">G</div><div class="t ch" style="left:430.65px;top:216.6px;width:20px;">H</div><div class="t ch" style="left:486.15px;top:216.6px;width:20px;">I</div><div class="t ch" style="left:541.65px;top:216.6px;width:20px;">J</div><div class="t ch" style="left:597.15px;top:216.6px;width:20px;">K</div><div class="t ch" style="left:652.65px;top:216.6px;width:20px;">L</div><div class="t ch" style="left:708.15px;top:216.6px;width:20px;">M</div><div class="t ch" style="left:763.65px;top:216.6px;width:20px;">N</div><div class="t ch" style="left:819.15px;top:216.6px;width:20px;">O</div><div class="t ch" style="left:874.65px;top:216.6px;width:20px;">P</div><div class="t ch" style="left:930.15px;top:216.6px;width:20px;">Q</div><div class="t ch" style="left:985.65px;top:216.6px;width:20px;">R</div><div class="t rh" style="left:2px;top:238.82px;width:21px;">1</div><div class="t rh" style="left:2px;top:257.46px;width:21px;">2</div><div class="t rh" style="left:2px;top:276.1px;width:21px;">3</div><div class="t rh" style="left:2px;top:294.74px;width:21px;">4</div><div class="t rh" style="left:2px;top:313.38px;width:21px;">5</div><div class="t rh" style="left:2px;top:332.02px;width:21px;">6</div><div class="t rh" style="left:2px;top:350.66px;width:21px;">7</div><div class="t rh" style="left:2px;top:369.3px;width:21px;">8</div><div class="t rh" style="left:2px;top:387.94px;width:21px;">9</div><div class="t rh" style="left:2px;top:406.58px;width:21px;">10</div><div class="t rh" style="left:2px;top:425.22px;width:21px;">11</div><div class="t rh" style="left:2px;top:443.86px;width:21px;">12</div><div class="t rh" style="left:2px;top:462.5px;width:21px;">13</div><div class="t rh" style="left:2px;top:481.14px;width:21px;">14</div><div class="t rh" style="left:2px;top:499.78px;width:21px;">15</div><div class="t rh" style="left:2px;top:518.42px;width:21px;">16</div>
<div class="a" style="left:1px;top:525px;width:1022px;height:24.500px;background:#e6e6e6;"></div>
<!-- vertical scrollbar -->
<div class="a" style="left:1008px;top:215px;width:15px;height:310.500px;background:#e6e6e6;"></div>
<div class="a" style="left:1008.800px;top:215.500px;width:13.700px;height:310px;background:#f4f4f4;border-radius:6.500px;"></div>
<svg class="i" style="left:1012.200px;top:219.200px" width="7.200" height="4.700" viewBox="0 0 8 5"><path d="M4 .2L7.900 4.900H.1z" fill="#6a6a6a"/></svg>
<div class="a" style="left:1012.700px;top:228px;width:6.200px;height:208.300px;background:#6e6e6e;border-radius:3.100px;"></div>
<svg class="i" style="left:1012.200px;top:517.200px" width="7.200" height="4.700" viewBox="0 0 8 5"><path d="M4 4.800L7.900 .1H.1z" fill="#6a6a6a"/></svg>
<!-- ===== shapes ===== -->
<div class="a shp" style="left:136.600px;top:267.200px;width:165.600px;height:68.600px;"></div>
<div class="a shp" style="left:56.200px;top:357.200px;width:165px;height:68.600px;"></div>
<div class="a shp" style="left:232.600px;top:356.700px;width:163.600px;height:68.700px;"></div>
<svg class="i" style="left:0;top:0" width="1024" height="576" viewBox="0 0 1024 576" fill="none">
 <defs><clipPath id="rc"><rect x="200" y="233.900" width="60" height="40"/></clipPath></defs>
 <rect x="54" y="264" width="345.500" height="165" stroke="#757575" stroke-width="1.100"/>
 <path d="M226.500 260V245.500" stroke="#757575" stroke-width="1.100"/>
 <g fill="#fff" stroke="#5c5c5c" stroke-width="1.200">
  <circle cx="54" cy="264" r="3.600"/><circle cx="226.500" cy="264" r="3.600"/><circle cx="399.500" cy="264" r="3.600"/>
  <circle cx="54" cy="346.800" r="3.600"/><circle cx="399.500" cy="346.800" r="3.600"/>
  <circle cx="54" cy="429" r="3.600"/><circle cx="226.500" cy="429" r="3.600"/><circle cx="399.500" cy="429" r="3.600"/>
 </g>
 <g clip-path="url(#rc)">
  <path d="M231.300 238.500a4.900 4.900 0 1 0-1.700 3.900" stroke="#5c5c5c" stroke-width="3.800"/>
  <path d="M229.300 236.700h9.200l-4.600 6z" fill="#fff" stroke="#5c5c5c" stroke-width="1.100" stroke-linejoin="round"/>
  <path d="M231.300 238.500a4.900 4.900 0 1 0-1.700 3.900" stroke="#fff" stroke-width="1.500"/>
  <path d="M231.300 237.600v1.600" stroke="#fff" stroke-width="1.500"/>
 </g>
</svg>
<!-- ===== chart ===== -->
<div class="a" style="left:433px;top:273px;width:365px;height:219px;background:#fff;border:1px solid #dcdcdc;"></div>
<svg class="j" style="left:565px;top:285.25px" width="101" height="13.5" viewBox="0 -220 1737.5 250" preserveAspectRatio="none" fill="#595959"><text x="10" y="0" textLength="1717" lengthAdjust="spacingAndGlyphs">グラフ タイトル</text></svg>
<svg class="i" style="left:0;top:0" width="1024" height="576" viewBox="0 0 1024 576" fill="none">
 <path d="M464.500 317.300H785.800M464.500 338.950H785.800M464.500 360.600H785.800M464.500 382.300H785.800M464.500 403.950H785.800M464.500 425.600H785.800M464.500 446.900H785.800M464.500 468.500H785.800" stroke="#d9d9d9" stroke-width="1"/>
 <rect x="501.250" y="425.600" width="33.400" height="42.900" fill="#156082"/>
 <rect x="608.300" y="382.300" width="33.700" height="86.200" fill="#156082"/>
 <rect x="715.800" y="338.950" width="33.400" height="129.550" fill="#156082"/>
</svg>
<div class="t yl" style="top:313.15px;">14.5</div>
<div class="t yl" style="top:334.8px;">14</div>
<div class="t yl" style="top:356.45px;">13.5</div>
<div class="t yl" style="top:378.15px;">13</div>
<div class="t yl" style="top:399.8px;">12.5</div>
<div class="t yl" style="top:421.45px;">12</div>
<div class="t yl" style="top:442.75px;">11.5</div>
<div class="t yl" style="top:464.35px;">11</div>
<div class="t xl" style="left:508px;">1</div>
<div class="t xl" style="left:615px;">2</div>
<div class="t xl" style="left:722.500px;">3</div>
<!-- ===== sheet tabs ===== -->
<svg class="i" style="left:16.500px;top:531.500px" width="5" height="9" viewBox="0 0 5 9" fill="none" stroke="#a0a0a0" stroke-width="1"><path d="M4.400 .6L.8 4.500 4.400 8.400"/></svg>
<svg class="i" style="left:41.500px;top:531.500px" width="5" height="9" viewBox="0 0 5 9" fill="none" stroke="#a0a0a0" stroke-width="1"><path d="M.6 .6L4.200 4.500 .6 8.400"/></svg>
<div class="a" style="left:83.500px;top:525px;width:52px;height:20.500px;background:#fff;border-radius:0 0 4.500px 4.500px;"></div>
<svg class="i" style="left:79.500px;top:525px" width="60" height="4" viewBox="0 0 60 4"><path d="M0 0h4v4c0-2.200-1.800-4-4-4zM60 0h-4v4c0-2.200 1.800-4 4-4z" fill="#fff"/></svg>
<div class="t" style="left:91px;top:529.500px;font-size:11.800px;color:#222;">Sheet1</div>
<div class="a" style="left:90px;top:542.200px;width:39px;height:1.300px;background:#1e8a4c;border-radius:1px;"></div>
<div class="t" style="left:149.500px;top:531.800px;font-size:11.800px;color:#333;">Sheet2</div>
<div class="a" style="left:196px;top:531px;width:1px;height:12px;background:#d4d4d4;"></div><div class="a" style="left:138.500px;top:531px;width:1px;height:12px;background:#dcdcdc;"></div>
<svg class="i" style="left:228px;top:532px" width="9" height="9" viewBox="0 0 9 9" fill="none" stroke="#555" stroke-width="1"><path d="M4.500 .3v8.400M.3 4.500h8.400"/></svg>
<!-- horizontal scrollbar -->
<div class="a" style="left:615.800px;top:532.500px;width:2px;height:2px;background:#4a4a4a;border-radius:1px;box-shadow:0 3px 0 #4a4a4a,0 6px 0 #4a4a4a;"></div>
<div class="a" style="left:629px;top:530px;width:380px;height:13px;background:#f5f5f5;border-radius:6.500px;"></div>
<svg class="i" style="left:632.500px;top:532.700px" width="5" height="8" viewBox="0 0 5 8"><path d="M.3 4L4.800 .2v7.600z" fill="#555"/></svg>
<div class="a" style="left:641.500px;top:533.500px;width:348.500px;height:6px;background:#6b6b6b;border-radius:3px;"></div>
<svg class="i" style="left:1000px;top:532.700px" width="5" height="8" viewBox="0 0 5 8"><path d="M4.700 4L.2 .2v7.600z" fill="#555"/></svg>
<!-- ===== status bar ===== -->
<div class="a" style="left:1.100px;top:549px;width:1021.800px;height:16.500px;background:#f4f4f4;border-top:1px solid #dcdcdc;border-radius:0 0 5px 5px;"></div>
<svg class="j" style="left:9.5px;top:553.2px" width="35.8" height="9.4" viewBox="0 -220 1000 250" preserveAspectRatio="none" fill="#505050"><text x="8" y="0" textLength="984" lengthAdjust="spacingAndGlyphs">準備完了</text></svg>
<svg class="i" style="left:0;top:540px" width="110" height="30" viewBox="0 540 110 30" fill="none">
 <rect x="60.200" y="553.600" width="9.800" height="8.600" stroke="#4a4a4a" stroke-width="1"/>
 <rect x="59.700" y="553.100" width="10.800" height="2.600" fill="#4a4a4a"/>
 <path d="M61.500 557.500h2.500M61.500 559.300h2M61.500 561h2" stroke="#4a4a4a" stroke-width=".8"/>
 <circle cx="67" cy="559.700" r="2.900" fill="#f4f4f4" stroke="#4a4a4a" stroke-width="1.100"/><circle cx="67" cy="559.700" r="1.200" fill="#333"/>
 <g stroke="#3a3a3a" stroke-width="1.150" stroke-linecap="round" stroke-linejoin="round">
  <circle cx="87.200" cy="554.500" r="1.350"/>
  <path d="M83.600 556.700l2.400.7h2.400l2.400-.7M86 557.400v2.600l-1.600 2.700M88.400 557.400v1.600"/>
  <path d="M89.700 558.600l3.900 3.900M93.600 558.600l-3.900 3.900" stroke-width="1.250"/>
 </g>
</svg>
<svg class="j" style="left:96.2px;top:553.1px" width="123.5" height="9.4" viewBox="0 -220 3521.2 250" preserveAspectRatio="none" fill="#333"><text x="20" y="0" textLength="3490" lengthAdjust="spacingAndGlyphs" font-weight="bold">アクセシビリティ: 検討が必要です</text></svg>
<!-- right -->
<svg class="i" style="left:720px;top:552.500px" width="12" height="11" viewBox="0 0 12 11" fill="none" stroke="#444" stroke-width="1"><path d="M5 7.500H.5V.5h10V4"/><path d="M2.500 9.500h3"/><circle cx="8.700" cy="7.700" r="1.600"/><path d="M8.700 4.800v1.300M8.700 9.300v1.300M5.800 7.700h1.300M10.300 7.700h1.300M6.700 5.700l.9.900M9.800 8.800l.9.900M10.700 5.700l-.9.900M7.600 8.800l-.9.900" stroke-width=".8"/></svg>
<svg class="j" style="left:732px;top:553.1px" width="36" height="9.4" viewBox="0 -220 1000 250" preserveAspectRatio="none" fill="#444"><text x="8" y="0" textLength="984" lengthAdjust="spacingAndGlyphs">表示設定</text></svg>
<div class="a" style="left:782px;top:550px;width:30px;height:16px;background:#d6d6d6;"></div>
<svg class="i" style="left:791.500px;top:552.500px" width="11" height="10" viewBox="0 0 11 10" fill="none" stroke="#333" stroke-width="1.150"><rect x=".6" y=".6" width="9.800" height="8.800"/><path d="M.6 3.500h9.800M.6 6.500h9.800M3.800 .6v8.800M7.200 .6v8.800"/></svg>
<svg class="i" style="left:821.500px;top:552.500px" width="11" height="10" viewBox="0 0 11 10" fill="none" stroke="#444" stroke-width="1"><rect x=".5" y=".5" width="10" height="9" rx="1"/><rect x="3" y="2.500" width="5" height="5"/><path d="M4.500 4h2M4.500 6h2" stroke-width=".7"/></svg>
<svg class="i" style="left:851.500px;top:552.500px" width="11" height="10" viewBox="0 0 11 10" fill="none" stroke="#444" stroke-width="1"><rect x=".5" y=".5" width="10" height="9"/><path d="M3.500 .5v4.500h4V.5"/></svg>
<div class="a" style="left:878px;top:557.300px;width:5.500px;height:1px;background:#777;"></div>
<div class="a" style="left:888px;top:557.300px;width:74.500px;height:1px;background:#8a8a8a;"></div>
<div class="a" style="left:923.500px;top:553.500px;width:3.200px;height:8.500px;background:#444;border-radius:.5px;"></div>
<svg class="i" style="left:967px;top:554.500px" width="6.500" height="6.500" viewBox="0 0 7 7" fill="none" stroke="#777" stroke-width="1"><path d="M3.500 .2v6.600M.2 3.500h6.600"/></svg>
<div class="t" style="left:983px;top:553px;font-size:9.800px;color:#333;-webkit-text-stroke:.12px #333;">100%</div>
</div>
</div>
</body>
</html>
